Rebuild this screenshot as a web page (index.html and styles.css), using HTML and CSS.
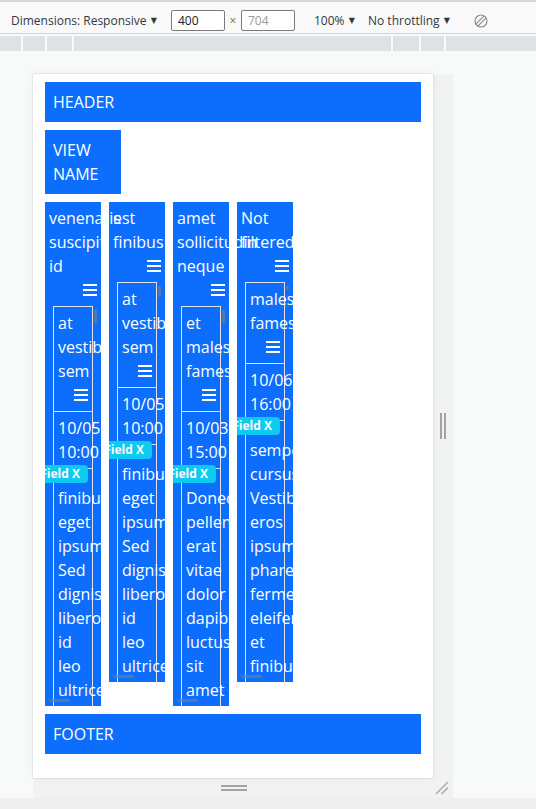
FILE: index.html
```html
<!DOCTYPE html>
<html>
<head>
<meta charset="utf-8">
<title>Responsive view</title>
<link rel="stylesheet" href="styles.css">
</head>
<body>
<div class="toolbar">
  <span class="tb-text tb-dims">Dimensions: Responsive <span class="caret">▼</span></span>
  <span class="tb-input">400</span>
  <span class="tb-times">×</span>
  <span class="tb-input tb-input-muted">704</span>
  <span class="tb-text tb-zoom">100% <span class="caret">▼</span></span>
  <span class="tb-text tb-throttle">No throttling <span class="caret">▼</span></span>
  <svg class="tb-rotate" width="14" height="14" viewBox="0 0 14 14">
    <defs><clipPath id="rc"><circle cx="7" cy="7" r="6"/></clipPath></defs>
    <circle cx="7" cy="7" r="6" fill="none" stroke="#8d8d8d" stroke-width="1.2"/>
    <g clip-path="url(#rc)" stroke="#8d8d8d" stroke-width="1.2">
      <line x1="-1" y1="13" x2="13" y2="-1"/>
      <line x1="1" y1="15" x2="15" y2="1"/>
    </g>
  </svg>
</div>
<div class="rulers">
  <div class="seg seg-1"></div>
  <div class="seg seg-2"></div>
  <div class="seg seg-3"></div>
  <div class="seg seg-4"></div>
  <div class="seg seg-5"></div>
  <div class="seg seg-6"></div>
  <div class="seg seg-7"></div>
</div>
<div class="stage">
  <div class="device">
    <div class="viewport">
      <div class="page">
        <div class="bar">HEADER</div>
        <div class="view-name">VIEW NAME</div>
        <div class="columns">

          <div class="col">
            <div class="col-title">venenatis suscipit id</div>
            <div class="menu-row"><svg class="menu-icon" width="14" height="12" viewBox="0 0 14 12"><rect y="0" width="14" height="2"/><rect y="5" width="14" height="2"/><rect y="10" width="14" height="2"/></svg></div>
            <div class="col-scroll">
              <div class="card">
                <div class="card-head">
                  <div class="card-title">at vestibulum sem</div>
                  <div class="menu-row"><svg class="menu-icon" width="14" height="12" viewBox="0 0 14 12"><rect y="0" width="14" height="2"/><rect y="5" width="14" height="2"/><rect y="10" width="14" height="2"/></svg></div>
                </div>
                <div class="card-date">10/05/2021 10:00</div>
                <div class="card-field">
                  <span class="badge">Field X</span>
                  finibus eget ipsum Sed dignissim libero id leo ultrices nunc
                </div>
              </div>
              <span class="thumb-v tv-14"></span>
              <span class="thumb-h"></span>
            </div>
          </div>

          <div class="col">
            <div class="col-title">est finibus</div>
            <div class="menu-row"><svg class="menu-icon" width="14" height="12" viewBox="0 0 14 12"><rect y="0" width="14" height="2"/><rect y="5" width="14" height="2"/><rect y="10" width="14" height="2"/></svg></div>
            <div class="col-scroll">
              <div class="card">
                <div class="card-head">
                  <div class="card-title">at vestibulum sem</div>
                  <div class="menu-row"><svg class="menu-icon" width="14" height="12" viewBox="0 0 14 12"><rect y="0" width="14" height="2"/><rect y="5" width="14" height="2"/><rect y="10" width="14" height="2"/></svg></div>
                </div>
                <div class="card-date">10/05/2021 10:00</div>
                <div class="card-field">
                  <span class="badge">Field X</span>
                  finibus eget ipsum Sed dignissim libero id leo ultrices nunc
                </div>
              </div>
              <span class="thumb-v tv-11"></span>
              <span class="thumb-h"></span>
            </div>
          </div>

          <div class="col">
            <div class="col-title">amet sollicitudin neque</div>
            <div class="menu-row"><svg class="menu-icon" width="14" height="12" viewBox="0 0 14 12"><rect y="0" width="14" height="2"/><rect y="5" width="14" height="2"/><rect y="10" width="14" height="2"/></svg></div>
            <div class="col-scroll">
              <div class="card">
                <div class="card-head">
                  <div class="card-title">et malesuada fames</div>
                  <div class="menu-row"><svg class="menu-icon" width="14" height="12" viewBox="0 0 14 12"><rect y="0" width="14" height="2"/><rect y="5" width="14" height="2"/><rect y="10" width="14" height="2"/></svg></div>
                </div>
                <div class="card-date">10/03/2021 15:00</div>
                <div class="card-field">
                  <span class="badge">Field X</span>
                  Donec pellentesque erat vitae dolor dapibus luctus sit amet lacus
                </div>
              </div>
              <span class="thumb-v tv-13"></span>
              <span class="thumb-h"></span>
            </div>
          </div>

          <div class="col">
            <div class="col-title">Not filtered</div>
            <div class="menu-row"><svg class="menu-icon" width="14" height="12" viewBox="0 0 14 12"><rect y="0" width="14" height="2"/><rect y="5" width="14" height="2"/><rect y="10" width="14" height="2"/></svg></div>
            <div class="col-scroll">
              <div class="card">
                <div class="card-head">
                  <div class="card-title">malesuada fames</div>
                  <div class="menu-row"><svg class="menu-icon" width="14" height="12" viewBox="0 0 14 12"><rect y="0" width="14" height="2"/><rect y="5" width="14" height="2"/><rect y="10" width="14" height="2"/></svg></div>
                </div>
                <div class="card-date">10/06/2021 16:00</div>
                <div class="card-field">
                  <span class="badge">Field X</span>
                  semper cursus Vestibulum eros ipsum pharetra fermentum eleifend et finibus
                </div>
              </div>
              <span class="thumb-v tv-4"></span>
              <span class="thumb-h"></span>
            </div>
          </div>

        </div>
        <div class="bar">FOOTER</div>
      </div>
    </div>
    <div class="handle-right"><span class="grip-v"></span><span class="grip-v"></span></div>
    <div class="handle-bottom"><span class="grip-h"></span><span class="grip-h"></span></div>
    <div class="handle-corner">
      <svg width="14" height="14" viewBox="0 0 14 14">
        <line x1="1" y1="13" x2="13" y2="1" stroke="#a9a9a9" stroke-width="1.5"/>
        <line x1="6.5" y1="13" x2="13" y2="6.5" stroke="#a9a9a9" stroke-width="1.5"/>
      </svg>
    </div>
  </div>
</div>
<div class="bottom-band"></div>
</body>
</html>
```

FILE: styles.css
```css
* { box-sizing: border-box; }

html, body {
  margin: 0;
  padding: 0;
}

body {
  width: 536px;
  height: 809px;
  overflow: hidden;
  background: #f8f9f9;
  font-family: "Open Sans", "Noto Sans", sans-serif;
  display: flex;
  flex-direction: column;
}

/* ---------- devtools toolbar ---------- */
.toolbar {
  flex: none;
  height: 34px;
  padding: 6px 0 0 11px;
  background: #f9f9f9;
  border-top: 2px solid #d6d7d8;
  border-bottom: 1px solid #cfd1d4;
  display: flex;
  align-items: center;
  font-size: 12px;
  color: #303942;
  white-space: nowrap;
}

.tb-text { flex: none; }
.tb-dims { width: 160px; }
.tb-zoom { width: 54px; margin-left: 19px; }
.tb-throttle { width: 106px; }

.caret {
  font-family: "DejaVu Sans", sans-serif;
  font-size: 8px;
  vertical-align: 2px;
  margin-left: 1px;
}

.tb-input {
  flex: none;
  width: 54px;
  height: 21px;
  padding-left: 6px;
  border: 1px solid #7b7b7b;
  border-radius: 2px;
  background: #fff;
  color: #202124;
  line-height: 19px;
}

.tb-input-muted { color: #9a9a9a; }

.tb-times {
  flex: none;
  width: 16px;
  text-align: center;
  color: #6d6d6d;
}

.tb-rotate { flex: none; display: block; }

/* ---------- media query rulers ---------- */
.rulers {
  flex: none;
  height: 15px;
  margin-top: 2px;
  display: flex;
  gap: 2px;
  background: #fafafa;
}

.seg { background: #dee1e6; flex: none; }
.seg-1 { width: 21px; }
.seg-2 { width: 22px; }
.seg-3 { width: 25px; }
.seg-4 { width: 317px; }
.seg-5 { width: 26px; }
.seg-6 { width: 23px; }
.seg-7 { flex: 1; }

/* ---------- stage & device frame ---------- */
.stage {
  flex: none;
  height: 747px;
  padding: 23px 0 0 33px;
  background: #f8f9f9;
}

.bottom-band {
  flex: 1;
  background: #efefef;
}

.device {
  display: grid;
  grid-template-columns: 400px 20px;
  grid-template-rows: 704px 20px;
  width: 420px;
  background: #f1f2f4;
}

.viewport {
  grid-area: 1 / 1 / 2 / 2;
  background: #fff;
  overflow: hidden;
  box-shadow: 0 0 1px rgba(0, 0, 0, 0.3), 0 0 10px rgba(0, 0, 0, 0.05);
  position: relative;
  z-index: 1;
}

.handle-right {
  grid-area: 1 / 2 / 2 / 3;
  display: flex;
  justify-content: center;
  align-items: center;
  gap: 2px;
}

.grip-v {
  width: 2px;
  height: 26px;
  background: #a3a3a3;
}

.handle-bottom {
  grid-area: 2 / 1 / 3 / 2;
  display: flex;
  flex-direction: column;
  justify-content: center;
  align-items: center;
  gap: 2px;
  padding-left: 1px;
}

.grip-h {
  width: 26px;
  height: 2px;
  background: #a3a3a3;
}

.handle-corner {
  grid-area: 2 / 2 / 3 / 3;
  display: flex;
  align-items: center;
  justify-content: center;
  padding: 0 2px 0 0;
}

.handle-corner svg { display: block; }

/* ---------- page inside the viewport ---------- */
.page {
  padding: 8px 12px;
  font-size: 16px;
  line-height: 24px;
  color: #fff;
}

.bar {
  background: #0d6efd;
  padding: 8px;
}

.view-name {
  width: 76px;
  margin: 8px 0;
  padding: 8px;
  background: #0d6efd;
}

.columns {
  display: flex;
  align-items: flex-start;
  gap: 8px;
  margin-bottom: 8px;
}

.col {
  flex: none;
  width: 56px;
  padding: 4px;
  background: #0d6efd;
  display: flex;
  flex-direction: column;
}

/* the title text spills over into the next column, painted above it */
.col-title {
  position: relative;
}

.menu-row {
  height: 24px;
  display: flex;
  justify-content: flex-end;
  align-items: center;
}

.menu-icon {
  display: block;
  fill: #fff;
}

.col-scroll {
  position: relative;
  height: 404px;
  margin: 0 -4px -4px;
  padding: 4px 8px 0;
  overflow: hidden;
}

.card {
  border: 1px solid #dfe3e8;
}

.card-head {
  padding: 4px;
}

.card-date {
  border-top: 1px solid #dfe3e8;
  padding: 4px;
}

.card-field {
  position: relative;
  border-top: 1px solid #dfe3e8;
  padding: 17px 4px 4px;
}

.badge {
  position: absolute;
  top: -4px;
  right: 4px;
  height: 18px;
  padding: 0 8px;
  border-radius: 4px;
  background: #0dcaf0;
  color: #fff;
  font-size: 12px;
  font-weight: 700;
  line-height: 18px;
  white-space: nowrap;
}

/* overlay scrollbar thumbs */
.thumb-v {
  position: absolute;
  right: 4px;
  top: 8px;
  width: 3px;
  border-radius: 2px;
  background: rgba(125, 125, 125, 0.65);
}

.tv-14 { top: 7px; height: 14px; }
.tv-11 { height: 11px; }
.tv-13 { height: 13px; }
.tv-4 { height: 4px; }

.thumb-h {
  position: absolute;
  left: 4px;
  bottom: 4px;
  width: 21px;
  height: 3px;
  border-radius: 2px;
  background: rgba(125, 125, 125, 0.65);
}
```
